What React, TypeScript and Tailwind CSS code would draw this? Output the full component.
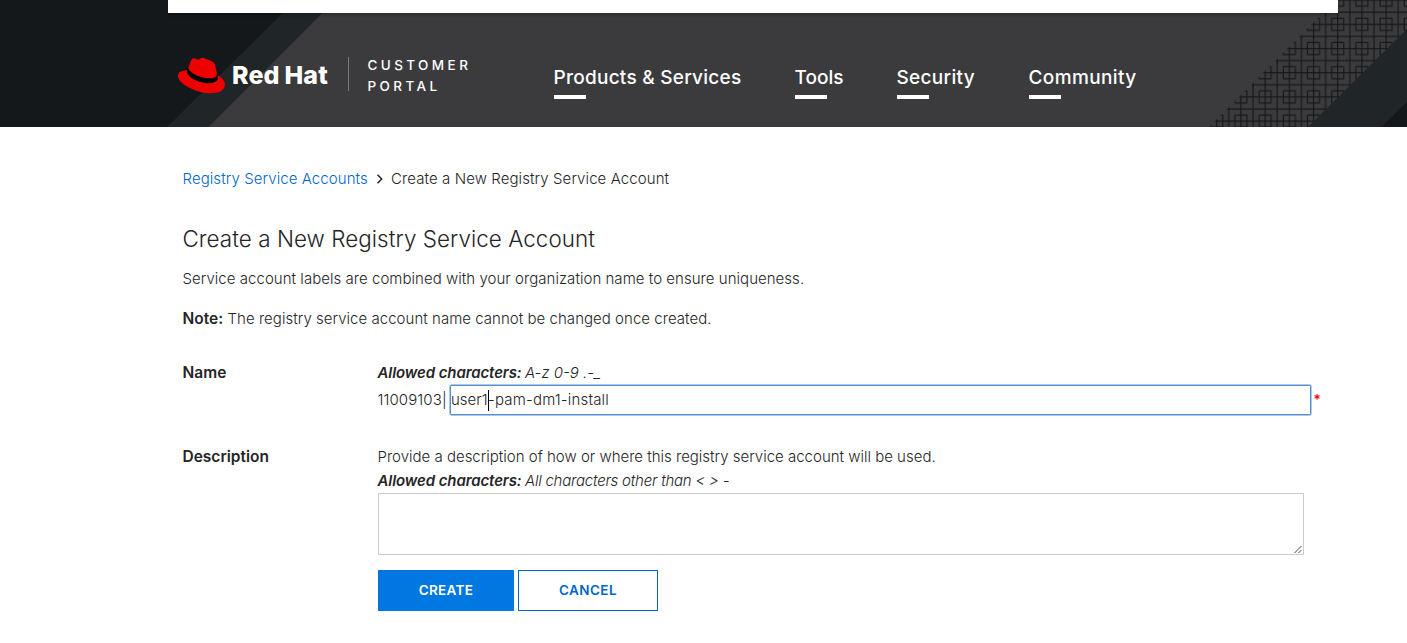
function HeaderBackdrop() {
  return (
    <svg className="absolute inset-0" width="1407" height="127" viewBox="0 0 1407 127" aria-hidden="true">
      <defs>
        <pattern id="lattice" width="24.2" height="24.2" patternUnits="userSpaceOnUse" patternTransform="translate(1322.6 9.2)">
          <path d="M0 3H24.2M0 15.1H24.2M3 0V24.2M15.1 0V24.2M9.1 9.1H21.1V21.1H9.1Z" fill="none" stroke="#161718" strokeWidth="1.15" />
        </pattern>
        <linearGradient id="fall" x1="0" y1="0" x2="0" y2="1">
          <stop offset="0" stopColor="#000" stopOpacity="0.22" />
          <stop offset="1" stopColor="#000" stopOpacity="0" />
        </linearGradient>
      </defs>
      <rect width="1407" height="127" fill="#3b3b3d" />
      <polygon points="0,0 335.5,0 208.5,127 0,127" fill="#202528" />
      <polygon points="0,0 296,0 167,127 0,127" fill="#14181a" />
      <polygon points="1336,0 1407,0 1407,127 1209,127" fill="url(#lattice)" />
      <polygon points="1407,29 1407,127 1308,127" fill="#202528" />
      <polygon points="1407,102 1407,127 1381.5,127" fill="#14181a" />
      <rect x="168" y="13" width="1170" height="5" fill="url(#fall)" />
    </svg>
  );
}

function Hat() {
  return (
    <svg width="47" height="47" viewBox="0 0 24 24" aria-hidden="true">
      <path fill="#000" d="M4.6 8.4 5.3 8.2 20 11.2 20.5 13.4 19.5 16 14 17 7 14.5 4 11Z" />
      <path
        fill="#e00"
        d="M16.009 13.386c1.577 0 3.86-.326 3.86-2.202a1.765 1.765 0 0 0-.04-.431l-.94-4.08c-.216-.898-.406-1.305-1.982-2.093-1.223-.625-3.888-1.658-4.676-1.658-.733 0-.947.946-1.822.946-.842 0-1.467-.706-2.255-.706-.757 0-1.25.515-1.63 1.576 0 0-1.06 2.99-1.197 3.424a.81.81 0 0 0-.028.245c0 1.162 4.577 4.974 10.71 4.974m4.101-1.435c.218 1.032.218 1.14.218 1.277 0 1.765-1.984 2.745-4.593 2.745-5.895.004-11.06-3.451-11.06-5.734a2.326 2.326 0 0 1 .19-.925C2.746 9.415 0 9.794 0 12.217c0 3.969 9.405 8.861 16.851 8.861 5.71 0 7.149-2.582 7.149-4.62 0-1.605-1.387-3.425-3.887-4.512"
      />
    </svg>
  );
}

const nav = [
  { label: "Products & Services", className: "w-[241px] tracking-[0.26px]" },
  { label: "Tools", className: "w-[102px] tracking-[0.02px]" },
  { label: "Security", className: "w-[132px] tracking-[0.31px]" },
  { label: "Community", className: "w-[120px] tracking-[0.38px]" },
];

function Header() {
  return (
    <header className="relative h-[127px] w-full overflow-hidden">
      <HeaderBackdrop />
      <div className="relative ml-[168px] w-[1170px]">
        <div className="h-[13px] bg-white" />
        <div className="flex items-start pl-[10px] text-white">
          <div className="mt-[38.5px] flex h-[47px] w-[170px] items-center">
            <Hat />
            <span className="ml-[7px] flex gap-[5px] text-[25px] leading-[30px] font-extrabold">
              <span className="tracking-[0.1px]">Red</span>
              <span className="tracking-[0.1px]">Hat</span>
            </span>
          </div>
          <div className="mt-[44px] h-[34px] w-px bg-[#77777a]" />
          <div className="mt-[42px] ml-[18.5px] w-[186.5px] text-[13.5px] leading-[21px] font-medium tracking-[3.4px]">
            CUSTOMER
            <br />
            PORTAL
          </div>
          <nav className="mt-[53px] flex text-[19px] leading-[24px] font-medium">
            {nav.map((n) => (
              <a key={n.label} className={n.className}>
                <span className="-ml-[0.5px] whitespace-nowrap">{n.label}</span>
                <span className="mt-[5px] block h-[4px] w-[32px] bg-white" />
              </a>
            ))}
          </nav>
        </div>
      </div>
    </header>
  );
}

export default function App() {
  return (
    <div className="min-h-[643px] w-full overflow-hidden bg-white font-['Inter',sans-serif] text-[15px] leading-[24px] font-[340] whitespace-nowrap text-[#252527]">
      <Header />
      <main className="ml-[182.5px] w-[1140px]">
        <div className="mt-[40px] flex items-center">
          <a className="w-[185.5px] tracking-[0.08px] text-[#0066cc]">Registry Service Accounts</a>
          <svg className="mx-[7.5px]" width="8" height="10" viewBox="0 0 8 10" fill="none" stroke="#252527" strokeWidth="1.5" aria-hidden="true">
            <path d="M1.5 0.8 5.7 5 1.5 9.2" />
          </svg>
          <span className="tracking-[0.09px]">Create a New Registry Service Account</span>
        </div>

        <h1 className="mt-[32px] text-[22.4px] leading-[32px] font-light tracking-[0.06px]">Create a New Registry Service Account</h1>
        <p className="mt-[12px] tracking-[0.04px]">
          Service account labels are combined with your organization name to ensure uniqueness.
        </p>
        <p className="mt-[16px] flex tracking-[0.035px]">
          <strong className="w-[45px] text-[15.5px] font-semibold tracking-normal">Note:</strong>
          The registry service account name cannot be changed once created.
        </p>

        <div className="mt-[30px] flex">
          <label className="w-[195px] text-[15.5px] font-semibold">Name</label>
          <div>
            <div className="flex italic">
              <strong className="w-[147.5px] font-semibold tracking-[-0.1px]">Allowed characters:</strong>
              <span>A-z 0-9 .-_</span>
            </div>
            <div className="flex h-[31px] items-center">
              <span className="mb-[2px] w-[71.5px] tracking-[0.1px]">11009103|</span>
              <div className="-mt-px flex h-[32px] w-[863px] items-center rounded-[3px] border border-[#a9c7ec] bg-white">
                <div className="flex h-full w-full items-center rounded-[1px] border border-[#5b8ecd]">
                  <span className="w-[37px]">user1</span>
                  <span className="-mr-px h-[21px] w-px bg-black" />
                  <span className="tracking-[0.17px]">-pam-dm1-install</span>
                </div>
              </div>
              <span className="mb-[1px] ml-[1.5px] text-[14px] font-medium text-[#f00]">*</span>
            </div>
          </div>
        </div>

        <div className="mt-[29px] flex">
          <label className="w-[195px] text-[15.5px] font-semibold">Description</label>
          <div>
            <p>Provide a description of how or where this registry service account will be used.</p>
            <div className="flex italic">
              <strong className="w-[147.5px] font-semibold tracking-[-0.1px]">Allowed characters:</strong>
              <span className="tracking-[-0.22px]">All characters other than &lt; &gt; -</span>
            </div>
            <div className="ml-[0.5px] flex h-[62px] w-[926px] items-end justify-end border border-[#ccc] bg-white">
              <svg width="9" height="9" viewBox="0 0 9 9" stroke="#444" strokeWidth="1" aria-hidden="true">
                <path d="M0.5 8 7.5 1M4.5 8 7.5 5" />
              </svg>
            </div>
            <div className="mt-[15px] ml-[0.5px] flex gap-[4px] text-[13.5px] font-semibold">
              <button className="h-[41px] w-[136px] bg-[#0077e1] pb-[2px] tracking-[0.3px] text-white">CREATE</button>
              <button className="h-[41px] w-[140px] border border-[#0066cc] pb-[2px] tracking-[0.4px] text-[#0066cc]">CANCEL</button>
            </div>
          </div>
        </div>
      </main>
    </div>
  );
}
